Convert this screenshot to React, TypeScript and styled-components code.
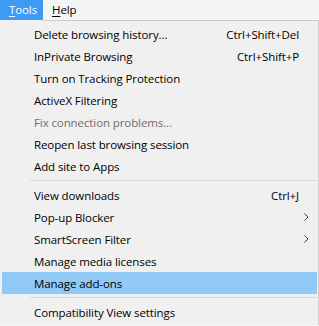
import styled, { createGlobalStyle } from 'styled-components';

const GlobalStyle = createGlobalStyle`
  html, body {
    margin: 0;
    padding: 0;
    background: #f5f5f5;
  }
  body {
    font-family: 'Open Sans', 'Noto Sans', sans-serif;
    font-size: 11.5px;
    letter-spacing: -0.1px;
    color: #000;
  }
`;

type Entry =
  | { kind: 'item'; label: string; shortcut?: string; submenu?: boolean; disabled?: boolean; active?: boolean }
  | { kind: 'sep' };

const entries: Entry[] = [
  { kind: 'item', label: 'Delete browsing history...', shortcut: 'Ctrl+Shift+Del' },
  { kind: 'item', label: 'InPrivate Browsing', shortcut: 'Ctrl+Shift+P' },
  { kind: 'item', label: 'Turn on Tracking Protection' },
  { kind: 'item', label: 'ActiveX Filtering' },
  { kind: 'item', label: 'Fix connection problems...', disabled: true },
  { kind: 'item', label: 'Reopen last browsing session' },
  { kind: 'item', label: 'Add site to Apps' },
  { kind: 'sep' },
  { kind: 'item', label: 'View downloads', shortcut: 'Ctrl+J' },
  { kind: 'item', label: 'Pop-up Blocker', submenu: true },
  { kind: 'item', label: 'SmartScreen Filter', submenu: true },
  { kind: 'item', label: 'Manage media licenses' },
  { kind: 'item', label: 'Manage add-ons', active: true },
  { kind: 'sep' },
  { kind: 'item', label: 'Compatibility View settings' },
];

const Bar = styled.div`
  display: flex;
  height: 20px;
  background: #f5f5f5;
`;

const BarButton = styled.div<{ $open?: boolean }>`
  display: flex;
  align-items: center;
  box-sizing: border-box;
  width: ${(p) => (p.$open ? '43px' : 'auto')};
  padding: 0 8px 0 9px;
  height: 20px;
  line-height: 20px;
  background: ${(p) => (p.$open ? '#3d9bf3' : 'transparent')};
  color: ${(p) => (p.$open ? '#fff' : '#000')};

  u {
    text-decoration: underline;
    text-underline-offset: 2px;
  }
`;

const Menu = styled.div`
  width: 315px;
  padding: 3px 1px 2px 2px;
  border-right: 1px solid #cccccc;
  background:
    linear-gradient(to right, transparent 43px, #cccccc 43px) top / 100% 1px no-repeat,
    #f0f0f0;
`;

const Item = styled.div<{ $active?: boolean; $disabled?: boolean }>`
  display: grid;
  grid-template-columns: 32px 1fr auto 18px;
  align-items: center;
  height: 22px;
  background: ${(p) => (p.$active ? '#91c9f7' : 'transparent')};
  color: ${(p) => (p.$disabled ? '#6d6d6d' : '#000')};
  white-space: nowrap;
`;

const Label = styled.span`
  grid-column: 2;
`;

const Shortcut = styled.span`
  grid-column: 3;
  padding-left: 20px;
`;

const Arrow = styled.svg`
  grid-column: 4;
  margin-left: 5px;
  display: block;
`;

const Separator = styled.div`
  height: 7px;
  display: flex;
  align-items: center;
  padding-left: 28px;

  &::after {
    content: '';
    flex: 1;
    height: 1px;
    background: #d7d7d7;
  }
`;

const SubArrow = () => (
  <Arrow width="5" height="8" viewBox="0 0 5 8">
    <polyline points="0.5,0.5 4,4 0.5,7.5" fill="none" stroke="#3c3c3c" strokeWidth="1" />
  </Arrow>
);

export default function App() {
  return (
    <>
      <GlobalStyle />
      <Bar>
        <BarButton $open>
          <span><u>T</u>ools</span>
        </BarButton>
        <BarButton>
          <span><u>H</u>elp</span>
        </BarButton>
      </Bar>
      <Menu>
        {entries.map((e, i) =>
          e.kind === 'sep' ? (
            <Separator key={i} />
          ) : (
            <Item key={i} $active={e.active} $disabled={e.disabled}>
              <Label>{e.label}</Label>
              {e.shortcut && <Shortcut>{e.shortcut}</Shortcut>}
              {e.submenu && <SubArrow />}
            </Item>
          )
        )}
      </Menu>
    </>
  );
}
